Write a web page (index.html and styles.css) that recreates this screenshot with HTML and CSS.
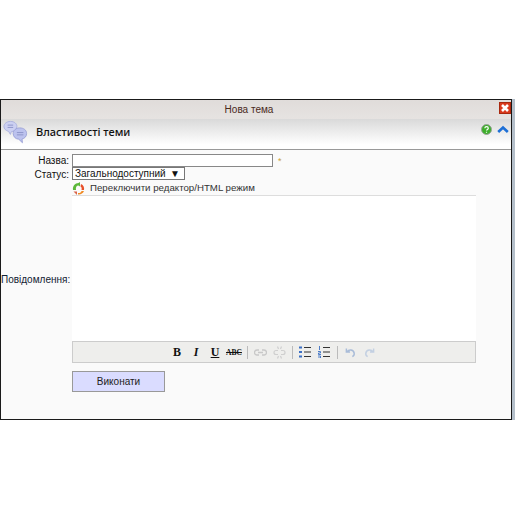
FILE: index.html
```html
<!DOCTYPE html>
<html lang="uk">
  <head>
    <meta charset="UTF-8" />
    <title>Нова тема</title>
    <link rel="stylesheet" href="styles.css">
  </head>
  <body>
    <div class="dialog">
      <div class="titlebar">
        <span>Нова тема</span>
        <svg class="close" width="12" height="12" viewBox="0 0 12 12">
          <rect width="12" height="12" fill="#d9391c" />
          <rect x=".5" y=".5" width="11" height="11" fill="none" stroke="#a8280f" />
          <path d="M3 3l6 6M9 3l-6 6" stroke="#fff" stroke-width="2.600" />
        </svg>
      </div>
      <div class="header">
        <svg class="bubbles" width="25" height="26" viewBox="0 0 27 27">
          <path d="M8 1c4.500 0 7 2.500 7 5.500s-2.500 5.500-6 5.500l-1 3-2-3.300C3 11 1 9 1 6.500 1 3.500 4 1 8 1z" fill="#ccd0f2" stroke="#aab0dd" />
          <path d="M18 8c4.500 0 7.500 2.500 7.500 6s-2.500 5.500-5 6l.5 4-4-3.800c-3.500-.2-6-2.800-6-6.200S14 8 18 8z" fill="#bcc2ee" stroke="#9aa1d6" />
          <path d="M5 5h6M5 7.500h6M15 13h7M15 15.500h7" stroke="#8d94c8" />
        </svg>
        <h1>Властивості теми</h1>
        <div class="header-icons">
          <svg width="11" height="11" viewBox="0 0 11 11">
            <circle cx="5.500" cy="5.500" r="5" fill="#3dae2b" stroke="#9aa39a" />
            <path d="M3.800 4.200c.2-2 3.500-2 3.500 0 0 1.200-1.800 1.200-1.800 2.400M5.500 7.800v1" stroke="#fff" stroke-width="1.200" fill="none" />
          </svg>
          <svg width="12" height="9" viewBox="0 0 12 9">
            <path d="M1.200 7L6 2.500 10.800 7" stroke="#1d6fd6" stroke-width="2.600" fill="none" />
          </svg>
        </div>
      </div>
      <form class="form">
        <label class="label">Назва:</label>
        <div class="name-row">
          <input class="name" type="text" />
          <span class="required">*</span>
        </div>
        <label class="label status-label">Статус:</label>
        <div class="status">Загальнодоступний<span class="arrow">▼</span></div>
        <div></div>
        <div class="switch">
          <svg width="13" height="13" viewBox="0 0 13 13">
            <path d="M1 8C.5 4 3 1 6.500 1L8 0v4.500L6.500 3.500C4.500 3.500 3.500 5.500 4 8z" fill="#5cb83a" />
            <path d="M9 2c2.500 1 3.500 3.500 3 6H9.500C10 6 9.500 5 8.500 4.500z" fill="#e8502a" />
            <path d="M12 9c-1 2.500-3.500 4-6 3.500V11c2 .2 3-.5 3.500-2z" fill="#f08a24" />
            <path d="M5 9.500v3.500L1.500 9.500H4z" fill="#d9654a" />
          </svg>
          <a>Переключити редактор/HTML режим</a>
        </div>
        <label class="label message-label">Повідомлення:</label>
        <div class="editor">
          <div class="editor-area"></div>
          <div class="toolbar">
            <span class="tool bold">B</span>
            <span class="tool italic">I</span>
            <span class="tool underline">U</span>
            <span class="tool strike">ABC</span>
            <i class="sep"></i>
            <span class="tool">
              <svg width="13" height="7" viewBox="0 0 13 7">
                <path d="M5 1H3a2.500 2.500 0 000 5h2M8 1h2a2.500 2.500 0 010 5H8M4 3.500h5" stroke="#c8c8c8" stroke-width="1.300" fill="none" />
              </svg>
            </span>
            <span class="tool">
              <svg width="13" height="13" viewBox="0 0 13 13">
                <path d="M5 4.500H3a2 2 0 000 4h2M8 4.500h2a2 2 0 010 4H8M4.500 .5l1 2.500M8.500 .5l-1 2.500M4.500 12.500l1-2.500M8.500 12.500l-1-2.500" stroke="#cfcfcf" stroke-width="1.200" fill="none" />
              </svg>
            </span>
            <i class="sep"></i>
            <span class="tool">
              <svg width="12" height="12" viewBox="0 0 12 12">
                <path d="M0 .5h3v2H0zM0 5h3v2H0zM0 9.500h3v2H0z" fill="#3b6fc4" />
                <path d="M5 1.500h7M5 6h7M5 10.500h7" stroke="#333" />
              </svg>
            </span>
            <span class="tool">
              <svg width="12" height="12" viewBox="0 0 12 12">
                <path d="M1.500 0v4M0 5.500h2.500v1.500H.5v1.500h2.500M0 10h2.500v2H0" stroke="#3b6fc4" stroke-width=".9" fill="none" />
                <path d="M5 1.500h7M5 6h7M5 10.500h7" stroke="#333" />
              </svg>
            </span>
            <i class="sep"></i>
            <span class="tool">
              <svg width="11" height="11" viewBox="0 0 12 11">
                <path d="M1.500 1v4h4M2 5c2-3 7-3 8 1 .4 2-1 3.500-2 4" stroke="#a9bcd8" stroke-width="1.600" fill="none" />
              </svg>
            </span>
            <span class="tool">
              <svg width="11" height="11" viewBox="0 0 12 11">
                <path d="M10.500 1v4h-4M10 5C8 2 3 2 2 6c-.4 2 1 3.500 2 4" stroke="#c3d0e2" stroke-width="1.600" fill="none" />
              </svg>
            </span>
          </div>
        </div>
        <div></div>
        <button class="submit" type="button">Виконати</button>
      </form>
    </div>
  </body>
</html>
```

FILE: styles.css
```css
* {
  margin: 0;
  padding: 0;
  box-sizing: border-box;
}

body {
  padding-top: 99px;
  background: #fff;
  font-family: "Liberation Sans", "DejaVu Sans", sans-serif;
  font-size: 10px;
  color: #111;
}

.dialog {
  width: 512px;
  height: 321px;
  border: 1px solid #1a1a1a;
  background: #fafafa;
  box-shadow: 3px 0 0 #b4bfca, 3px 1px 0 #b4bfca, 0 1px 0 #b4bfca;
}

.titlebar {
  height: 19px;
  display: flex;
  align-items: center;
  justify-content: center;
  padding-right: 14px;
  position: relative;
  background: linear-gradient(#e0dcda, #e6e3e1);
  color: #4a2a1c;
}

.close {
  position: absolute;
  right: 0;
  top: 2px;
}

.header {
  height: 31px;
  display: flex;
  align-items: center;
  padding-left: 2px;
  border-bottom: 1px solid #999;
  background: linear-gradient(#d9d9d9, #fff 85%);
}

.bubbles {
  flex: none;
  margin-top: -3px;
}

.header h1 {
  font-family: "Noto Sans", sans-serif;
  font-size: 11px;
  font-weight: 500;
  margin-left: 8px;
  margin-top: -5px;
  flex: 1;
}

.header-icons {
  display: flex;
  align-items: center;
  gap: 5px;
  padding-right: 2px;
  margin-top: -9px;
}

.form {
  display: grid;
  grid-template-columns: 68px 404px;
  column-gap: 3px;
  padding-top: 4px;
  align-items: center;
}

.label {
  text-align: right;
  line-height: 13px;
}

.status-label {
  height: 13px;
  line-height: 15px;
}

.message-label {
  color: #123;
  white-space: nowrap;
}

.name-row {
  display: flex;
  align-items: center;
  gap: 5px;
}

.name {
  width: 201px;
  height: 13px;
  border: 1px solid #888;
  background: #fff;
}

.required {
  color: #c9a23c;
  font-size: 9px;
}

.status {
  width: 113px;
  height: 13px;
  display: flex;
  justify-content: space-between;
  padding: 0 2px;
  line-height: 12px;
  border: 1px solid #777;
  background: #fff;
  white-space: nowrap;
}

.arrow {
  font-size: 10px;
  padding-right: 2px;
}

.switch {
  display: flex;
  align-items: flex-start;
  gap: 5px;
  height: 13px;
  margin-top: 2px;
  font-size: 9.700px;
  line-height: 12px;
  color: #333;
}

.editor {
  display: flex;
  flex-direction: column;
}

.editor-area {
  height: 146px;
  background: #fff;
  border-top: 1px solid #ddd;
}

.toolbar {
  height: 22px;
  display: flex;
  align-items: center;
  justify-content: center;
  padding-right: 2px;
  border: 1px solid #ccc;
  background: #eeeeec;
}

.tool {
  width: 19px;
  display: flex;
  align-items: center;
  justify-content: center;
  font-family: "Liberation Serif", serif;
  font-size: 12px;
  font-weight: 700;
  color: #111;
}

.italic {
  font-style: italic;
}

.underline {
  text-decoration: underline;
}

.strike {
  font-size: 7.500px;
  text-decoration: line-through;
}

.sep {
  width: 1px;
  height: 13px;
  margin: 0 3px;
  background: #bbb;
}

.submit {
  width: 93px;
  height: 21px;
  margin-top: 8px;
  border: 1px solid #999;
  background: #dadcff;
  font: inherit;
  color: #222;
}
```
